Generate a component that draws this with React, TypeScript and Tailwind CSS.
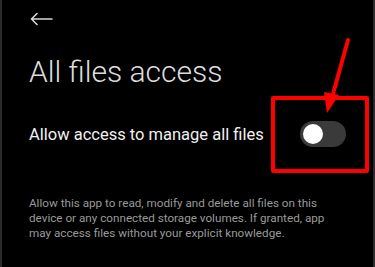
import React from "react";

export default function App() {
  return (
    <div
      className="relative w-[375px] h-[267px] overflow-hidden bg-black border-x-2 border-[#2b2b2b]"
      style={{ fontFamily: "Roboto, 'Noto Sans', sans-serif" }}
    >
      <div className="flex flex-col pl-[27px] pr-[27px]">
        <div className="pt-[8px] h-[30px] flex items-start">
          <svg width="23" height="22" viewBox="0 0 23 22" className="ml-[1px]">
            <path d="M1.5 11 H22 M1.5 11 L7 5.5 M1.5 11 L7 16.5" stroke="#d8d8d8" strokeWidth="1.6" fill="none" strokeLinecap="round" />
          </svg>
        </div>
        <h1 className="mt-[24px] text-[30px] leading-[36px] font-light text-[#dcdcdc]">All files access</h1>
        <div className="mt-[31px] flex items-center justify-between h-[26px]">
          <span className="text-[16.5px] leading-[26px] text-[#f0f0f0] pt-[2px]">Allow access to manage all files</span>
          <div className="w-[46px] h-[26px] rounded-full bg-[#3a3a3a] flex items-center px-[3px]">
            <div className="w-[20px] h-[20px] rounded-full bg-white" />
          </div>
        </div>
        <p className="mt-[49px] text-[11.7px] leading-[15px] text-[#9a9a9a]">
          Allow this app to read, modify and delete all files on this device or any connected storage volumes. If granted, app may access files without your explicit knowledge.
        </p>
      </div>
      <div className="absolute left-[269px] top-[96px] w-[98px] h-[77px] border-[4px] border-[#ff0000] rounded-[2px]" />
      <svg className="absolute left-0 top-0" width="375" height="267" viewBox="0 0 375 267">
        <line x1="346" y1="40" x2="331" y2="94" stroke="#ff0000" strokeWidth="4" strokeLinecap="round" />
        <polygon points="322,92 337,95 325,113" fill="#ff0000" />
      </svg>
    </div>
  );
}
